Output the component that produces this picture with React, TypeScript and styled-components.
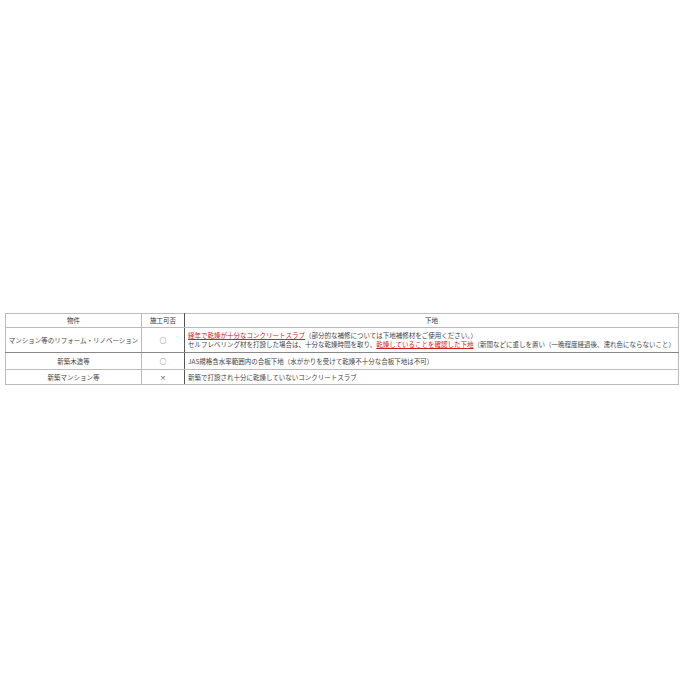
import styled, { createGlobalStyle } from "styled-components";

const GlobalStyle = createGlobalStyle`
    html, body {
        margin: 0;
        padding: 0;
        background: #ffffff;
    }
    body {
        font-family: "Noto Sans CJK JP", "Noto Sans", sans-serif;
    }
`

const Page = styled.div`
    width: 700px;
    height: 700px;
    padding: 313px 0 0 5px;
    box-sizing: border-box;
`

const Table = styled.table`
    width: 673px;
    border-collapse: collapse;
    table-layout: fixed;
    font-size: 6.5px;
    line-height: 9px;
    color: #444;
    white-space: nowrap;
`

const HeadCell = styled.th`
    height: 13px;
    padding: 0;
    border: 1px solid #bbb;
    border-right-color: ${({ $dark }: { $dark?: boolean }) => ($dark ? "#555" : "#bbb")};
    font-weight: normal;
    color: #333;
    text-align: center;
    vertical-align: middle;
`

const Row = styled.tr<{ $h: number; $strong?: boolean }>`
    height: ${({ $h }) => $h}px;
    td {
        border-bottom-color: ${({ $strong }) => ($strong ? "#888" : "#bbb")};
    }
`

const Cell = styled.td<{ $center?: boolean; $dark?: boolean }>`
    padding: 0 ${({ $center }) => ($center ? 0 : 3)}px;
    border: 1px solid #bbb;
    border-right-color: ${({ $dark }) => ($dark ? "#555" : "#bbb")};
    text-align: ${({ $center }) => ($center ? "center" : "left")};
    vertical-align: middle;
    overflow: hidden;
`

const Mark = styled.span`
    color: #d02020;
    text-decoration: underline;
    text-underline-offset: 1px;
`

const App = () => {
    return (
        <Page>
            <GlobalStyle />
            <Table>
                <colgroup>
                    <col style={{ width: 136 }} />
                    <col style={{ width: 43 }} />
                    <col style={{ width: 494 }} />
                </colgroup>
                <thead>
                    <tr>
                        <HeadCell>物件</HeadCell>
                        <HeadCell $dark>施工可否</HeadCell>
                        <HeadCell>下地</HeadCell>
                    </tr>
                </thead>
                <tbody>
                    <Row $h={25} $strong>
                        <Cell $center>マンション等のリフォーム・リノベーション</Cell>
                        <Cell $center $dark>○</Cell>
                        <Cell>
                            <Mark>経年で乾燥が十分なコンクリートスラブ</Mark>（部分的な補修については下地補修材をご使用ください。）
                            <br />
                            セルフレベリング材を打設した場合は、十分な乾燥時間を取り、<Mark>乾燥していることを確認した下地</Mark>（新聞などに重しを置い（一晩程度経過後、濡れ色にならないこと）
                        </Cell>
                    </Row>
                    <Row $h={17}>
                        <Cell $center>新築木造等</Cell>
                        <Cell $center $dark>○</Cell>
                        <Cell>JAS規格含水率範囲内の合板下地（水がかりを受けて乾燥不十分な合板下地は不可）</Cell>
                    </Row>
                    <Row $h={15}>
                        <Cell $center>新築マンション等</Cell>
                        <Cell $center $dark>×</Cell>
                        <Cell>新築で打設され十分に乾燥していないコンクリートスラブ</Cell>
                    </Row>
                </tbody>
            </Table>
        </Page>
    )
}

export default App;
